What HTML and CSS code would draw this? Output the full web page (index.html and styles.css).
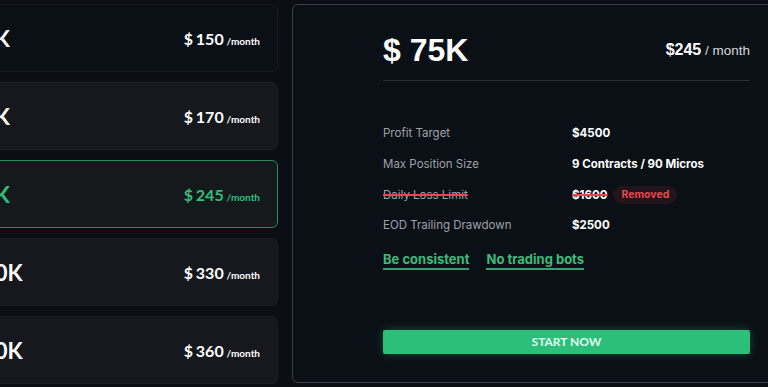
FILE: index.html
```html
<!DOCTYPE html>
<html lang="en">
<head>
    <meta charset="UTF-8">
    <meta name="viewport" content="width=device-width, initial-scale=1.0">
    <title>Plans</title>
    <link rel="stylesheet" href="styles.css">
</head>
<body>
    <div class="layout">
        <div class="plans">
            <div class="plan first">
                <span class="size">$ 25K</span>
                <span class="price">$ 150 <small>/month</small></span>
            </div>
            <div class="plan">
                <span class="size">$ 50K</span>
                <span class="price">$ 170 <small>/month</small></span>
            </div>
            <div class="plan selected">
                <span class="size">$ 75K</span>
                <span class="price">$ 245 <small>/month</small></span>
            </div>
            <div class="plan">
                <span class="size">$ 100K</span>
                <span class="price">$ 330 <small>/month</small></span>
            </div>
            <div class="plan">
                <span class="size">$ 150K</span>
                <span class="price">$ 360 <small>/month</small></span>
            </div>
        </div>

        <div class="panel">
            <div class="panel-body">
                <div class="head">
                    <h1>$ 75K</h1>
                    <div class="head-price"><strong>$245</strong> / month</div>
                </div>

                <div class="rules">
                    <div class="rule">
                        <span class="label">Profit Target</span>
                        <span class="value">$4500</span>
                    </div>
                    <div class="rule">
                        <span class="label">Max Position Size</span>
                        <span class="value">9 Contracts / 90 Micros</span>
                    </div>
                    <div class="rule">
                        <span class="label struck">Daily Loss Limit</span>
                        <span class="value"><span class="struck">$1600</span><span class="badge">Removed</span></span>
                    </div>
                    <div class="rule">
                        <span class="label">EOD Trailing Drawdown</span>
                        <span class="value">$2500</span>
                    </div>
                </div>

                <div class="links">
                    <a class="link" href="#">Be consistent</a>
                    <a class="link" href="#">No trading bots</a>
                </div>

                <button class="start">START NOW</button>
            </div>
        </div>
    </div>
</body>
</html>
```

FILE: styles.css
```css
html, body {
    margin: 0;
    height: 100%;
    overflow: hidden;
    background: #0b0f15;
}
body {
    font-family: Lato, 'Noto Sans', sans-serif;
    color: #fff;
}
.layout {
    display: flex;
    gap: 14px;
    width: 880px;
    margin-left: -100px;
    padding-top: 4px;
}
.plans {
    width: 378px;
    flex-shrink: 0;
    display: flex;
    flex-direction: column;
    gap: 10px;
}
.plan {
    height: 68px;
    box-sizing: border-box;
    display: flex;
    align-items: center;
    justify-content: space-between;
    padding: 0 17px 0 50px;
    background: #16181d;
    border: 1px solid #1a1d22;
    border-radius: 6px;
}
.plan.first {
    background: #0b0f16;
    border-color: #161a21;
}
.plan.selected {
    background: #15191c;
    border-color: #2c8a5e;
    color: #2fc07b;
}
.size {
    font-size: 22px;
    font-weight: 700;
}
.price {
    font-size: 16px;
    font-weight: 700;
    word-spacing: -1px;
}
.price small {
    font-size: 10px;
    font-weight: 700;
    word-spacing: 0;
}
.panel {
    flex: 1;
    height: 379px;
    box-sizing: border-box;
    background: #0b1017;
    border: 1px solid #3a3f47;
    border-radius: 6px;
    padding: 0 29px 0 90px;
}
.panel-body {
    display: flex;
    flex-direction: column;
}
.head {
    display: flex;
    justify-content: space-between;
    align-items: center;
    padding: 29px 0 14px;
    border-bottom: 1px solid #2a2f36;
    font-family: 'Liberation Sans', Arial, sans-serif;
}
.head h1 {
    margin: 0;
    font-size: 32px;
    line-height: 1;
}
.head-price {
    font-size: 13.5px;
    color: #d8dade;
}
.head-price strong {
    font-size: 16px;
    color: #fff;
}
.rules {
    margin-top: 37px;
    font-family: Inter, 'Noto Sans', sans-serif;
    font-size: 11.5px;
}
.rule {
    display: flex;
    align-items: center;
    height: 30.7px;
}
.label {
    width: 189px;
    color: #9ea2a9;
}
.value {
    display: flex;
    align-items: center;
    gap: 6px;
    font-weight: 700;
}
.struck {
    text-decoration: line-through;
    text-decoration-color: #e5484d;
    text-decoration-thickness: 2px;
}
.badge {
    font-size: 10.5px;
    color: #e5484d;
    background: #22141a;
    border-radius: 9px;
    padding: 2px 8px;
    line-height: 14px;
}
.links {
    display: flex;
    gap: 17px;
    margin-top: 9px;
    font-family: Inter, 'Noto Sans', sans-serif;
}
.link {
    color: #3dbb7c;
    font-size: 13px;
    font-weight: 700;
    text-decoration: none;
    line-height: 18px;
    border-bottom: 2px solid #3a9f70;
}
.start {
    margin-top: 60px;
    height: 24px;
    border: none;
    border-radius: 2px;
    background: #2bbf7a;
    color: #e2fbee;
    font-family: Lato, 'Noto Sans', sans-serif;
    font-size: 12px;
    font-weight: 700;
    box-shadow: 0 0 8px rgba(43, 191, 122, 0.35);
    cursor: pointer;
}
```
